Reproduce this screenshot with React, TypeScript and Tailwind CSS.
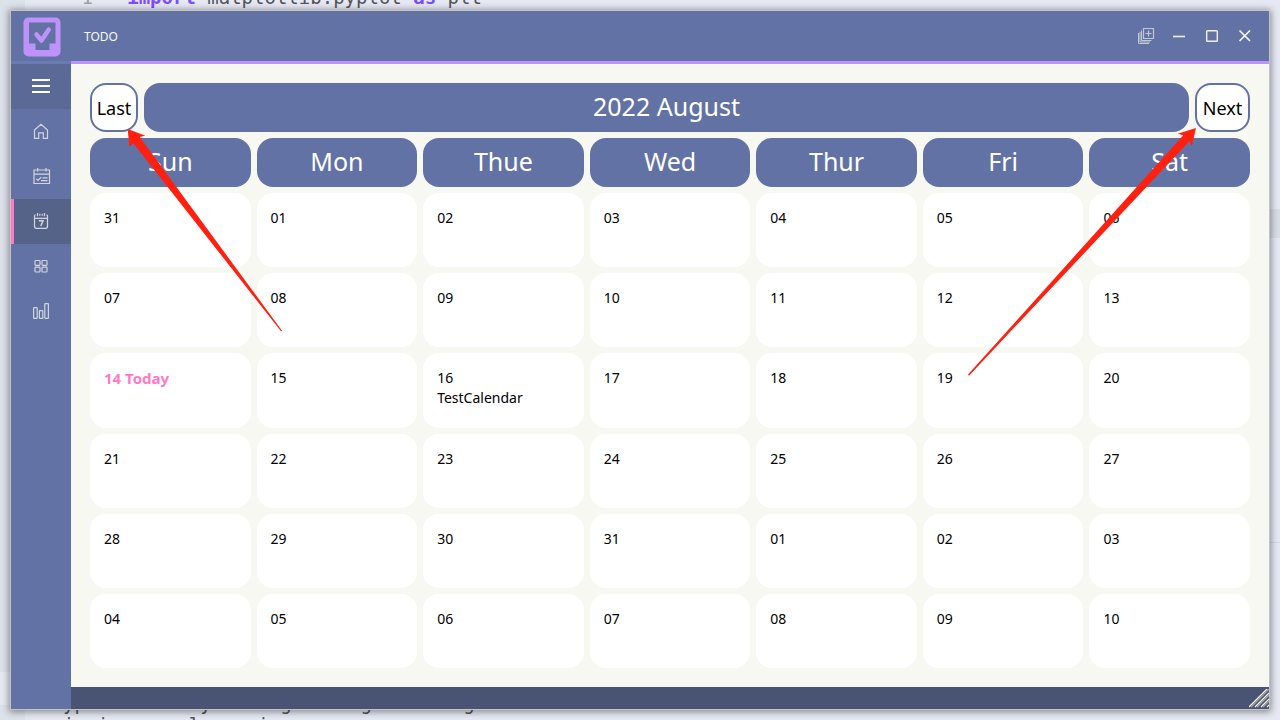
import type { ReactNode } from "react";

const weekdays = ["Sun", "Mon", "Thue", "Wed", "Thur", "Fri", "Sat"];

type Day = { label: string; today?: boolean; event?: string };

const pad = (n: number) => String(n).padStart(2, "0");

const days: Day[] = [
  { label: "31" },
  ...Array.from({ length: 31 }, (_, i) => ({
    label: pad(i + 1),
    today: i + 1 === 14,
    event: i + 1 === 16 ? "TestCalendar" : undefined,
  })),
  ...Array.from({ length: 10 }, (_, i) => ({ label: pad(i + 1) })),
];

const weeks = Array.from({ length: 6 }, (_, w) => days.slice(w * 7, w * 7 + 7));

function Logo() {
  return (
    <svg width="38" height="40" viewBox="0 0 38 40" aria-hidden="true">
      <rect x="0.500" y="0.500" width="37" height="39" rx="5" fill="#bd93f9" />
      <path d="M6 5.500H32.500V26.500H26.500V33H12.500V26.500H6Z" fill="#6272a4" />
      <path d="M13.500 17.500L18.500 23.500L25.800 12.500" fill="none" stroke="#bd93f9" strokeWidth="4.500" strokeLinecap="round" strokeLinejoin="round" />
    </svg>
  );
}

function Glyph({ children }: { children: ReactNode }) {
  return (
    <svg width="20" height="20" viewBox="0 0 20 20" fill="none" stroke="#d3d5dc" strokeWidth="1.2" aria-hidden="true">
      {children}
    </svg>
  );
}

const navItems = [
  {
    name: "Home",
    icon: (
      <Glyph>
        <path d="M3.500 9L10 3.300L16.500 9V17.300H12.300V11.800H7.700V17.300H3.500Z" />
      </Glyph>
    ),
  },
  {
    name: "Tasks",
    icon: (
      <Glyph>
        <path d="M3 4H18.500V17.500H3ZM3 8.200H18.500M6.700 2V5.500M15 2V5.500" />
        <path d="M5.300 12.800L7 14.500L10.300 11.200M11.500 11.800H16.500M10 14.700H16.500" />
      </Glyph>
    ),
  },
  {
    name: "Calendar",
    active: true,
    icon: (
      <Glyph>
        <path d="M4.500 3.800Q3.500 3.800 3.500 5V15.300Q3.500 17.300 5.500 17.300H14.500Q16.500 17.300 16.500 15.300V5Q16.500 3.800 15.500 3.800M3.500 7.300H16.500M6.500 2V5.200M13.500 2V5.200M8.800 2.800V4.800M11.200 2.800V4.800" />
        <path d="M7.800 9.800H12L9.800 15" strokeWidth="1.500" />
      </Glyph>
    ),
  },
  {
    name: "Board",
    icon: (
      <Glyph>
        <rect x="4" y="4.500" width="5" height="4.800" rx="0.800" />
        <rect x="11" y="4.500" width="5" height="4.800" rx="0.800" />
        <rect x="4" y="11.200" width="5" height="4.800" rx="0.800" />
        <rect x="11" y="11.200" width="5" height="4.800" rx="0.800" />
      </Glyph>
    ),
  },
  {
    name: "Statistics",
    icon: (
      <Glyph>
        <rect x="2.600" y="6.600" width="3.600" height="10.800" rx="0.600" />
        <rect x="8.400" y="9.600" width="3.400" height="7.800" rx="0.600" />
        <rect x="13.800" y="2.600" width="3.600" height="14.800" rx="0.600" />
      </Glyph>
    ),
  },
];

function TitleBar() {
  return (
    <header className="flex h-[50px] shrink-0 items-center bg-[#6272a4] pt-0.5 pr-2 pl-3">
      <Logo />
      <h1 className="ml-[23px] text-[12px] text-[#f8f8f2]">TODO</h1>
      <div className="mb-0.5 ml-auto flex">
        <button type="button" aria-label="Duplicate" className="grid h-8 w-[33px] place-items-center">
          <svg width="18" height="18" viewBox="0 0 18 18" fill="none" stroke="#c3c7d4" aria-hidden="true">
            <path d="M6.500 1.500H16.500V11.500H6.500Z" strokeWidth="1.200" />
            <path d="M11.500 3.500V9.500M8.500 6.500H14.500" strokeWidth="1.200" />
            <path d="M4.500 3.500V13.500H14.500M3 4.800V15H13M1.500 6V16.500H12" />
          </svg>
        </button>
        <button type="button" aria-label="Minimize" className="grid h-8 w-[33px] place-items-center">
          <svg width="14" height="14" viewBox="0 0 14 14" stroke="#f0f0f2" strokeWidth="1.600" aria-hidden="true">
            <path d="M1 7.500H13" />
          </svg>
        </button>
        <button type="button" aria-label="Maximize" className="grid h-8 w-[33px] place-items-center">
          <svg width="14" height="14" viewBox="0 0 14 14" fill="none" stroke="#f0f0f2" strokeWidth="1.400" aria-hidden="true">
            <rect x="1.700" y="1.700" width="10.600" height="10.600" rx="0.800" />
          </svg>
        </button>
        <button type="button" aria-label="Close" className="grid h-8 w-[33px] place-items-center">
          <svg width="14" height="14" viewBox="0 0 14 14" stroke="#f8f8f2" strokeWidth="1.700" aria-hidden="true">
            <path d="M1.500 1.500L12 12M12 1.500L1.500 12" />
          </svg>
        </button>
      </div>
    </header>
  );
}

function Sidebar() {
  return (
    <nav className="w-[60px] shrink-0 border-t-[3px] border-[#6a7ab2] bg-[#6272a4]">
      <button type="button" aria-label="Menu" className="flex h-[45px] w-full items-center justify-center bg-[#5b6996] pb-0.5">
        <svg width="20" height="16" viewBox="0 0 20 16" stroke="#ffffff" strokeWidth="2" aria-hidden="true">
          <path d="M1 2H19M1 8H19M1 14H19" />
        </svg>
      </button>
      {navItems.map((item) => (
        <button
          key={item.name}
          type="button"
          aria-label={item.name}
          className={
            item.active
              ? "flex h-[45px] w-full items-center justify-center border-l-[3px] border-[#ff79c6] bg-[#566388] pr-[3px] pb-0.5"
              : "flex h-[45px] w-full items-center justify-center pb-0.5"
          }
        >
          {item.icon}
        </button>
      ))}
    </nav>
  );
}

function Calendar() {
  return (
    <main className="relative flex min-h-0 flex-1 flex-col gap-1.5 border-t-[3px] border-[#bd93f9] bg-[#f8f8f2] p-[19px]">
      <div className="flex h-[49px] shrink-0 gap-1.5">
        <button type="button" className="w-12 rounded-2xl border-2 border-[#6272a4] bg-white pt-0.5 text-[18px] text-black">
          Last
        </button>
        <h2 className="flex flex-1 items-center justify-center rounded-2xl bg-[#6272a4] pb-0.5 text-[25px] text-white">
          2022 August
        </h2>
        <button type="button" className="w-[55px] rounded-2xl border-2 border-[#6272a4] bg-white pt-0.5 text-[18px] text-black">
          Next
        </button>
      </div>
      <table className="flex min-h-0 flex-1 flex-col gap-1.5">
        <thead className="block shrink-0">
          <tr className="grid grid-cols-7 gap-1.5">
            {weekdays.map((d) => (
              <th key={d} scope="col" className="flex h-[49px] items-center justify-center rounded-2xl bg-[#6272a4] pb-0.5 text-[25px] font-normal text-white">
                {d}
              </th>
            ))}
          </tr>
        </thead>
        <tbody className="flex min-h-0 flex-1 flex-col gap-1.5">
          {weeks.map((week, w) => (
            <tr key={w} className="grid min-h-0 flex-1 grid-cols-7 gap-1.5">
              {week.map((day, i) => (
                <td key={i} className="rounded-2xl bg-white px-3.5 pt-[15px] text-[14px] leading-5 text-black">
                  {day.today ? <strong className="text-[15px] text-[#ff79c6]">{day.label} Today</strong> : day.label}
                  {day.event && <p>{day.event}</p>}
                </td>
              ))}
            </tr>
          ))}
        </tbody>
      </table>
      <svg className="pointer-events-none absolute top-[64px] left-[56px]" width="156" height="204" viewBox="0 0 156 204" aria-hidden="true">
        <path d="M0.700 1L18.300 7.700L12.700 9L155 202.700L154 203.300L6.300 15.300L2.300 18.700Z" fill="#ff2010" />
      </svg>
      <svg className="pointer-events-none absolute top-[63px] right-[72px]" width="230" height="250" viewBox="0 0 230 250" aria-hidden="true">
        <path d="M229 1L210.700 6.700L216.300 8.300L1 247.500L2 248.700L222.700 14L224.700 19.300Z" fill="#ff2010" />
      </svg>
    </main>
  );
}

function StatusBar() {
  return (
    <footer className="flex h-[22px] shrink-0 items-end justify-end bg-[#495474]">
      <svg width="20" height="20" viewBox="0 0 20 20" aria-hidden="true">
        <path d="M0 18L20 -2M6 18L20 4M12 18L20 10M18 18L20 16" stroke="#f4f4ec" strokeWidth="1.300" />
        <path d="M2 18L20 0M8 18L20 6M14 18L20 12" stroke="#a5a5a0" strokeWidth="1.500" />
      </svg>
    </footer>
  );
}

function EditorBackdrop() {
  return (
    <div aria-hidden="true" className="absolute inset-0 flex overflow-hidden font-['DejaVu_Sans_Mono',monospace] text-[19px] leading-[22px] text-[#55555c]">
      <div className="flex w-[25px] shrink-0 flex-col justify-end bg-[#dde1ea] pb-[15px]">
        <div className="h-[33px] bg-[#e6e9f3]" />
      </div>
      <div className="flex flex-1 flex-col justify-between bg-[#e6e9f3]">
        <pre className="-mt-3.5 pl-[45px] font-[inherit]">
          <span className="text-[#a0a0a4]"> 1</span>
          {"   "}
          <span className="font-bold text-[#7c4dff]">import</span> matplotlib.pyplot <span className="font-bold text-[#7c4dff]">as</span> plt
        </pre>
        <pre className="-mb-4 pl-[38px] font-[inherit]">{"yp          y      g      g        g\ni  i       l     i"}</pre>
      </div>
      <div className="flex w-2.5 shrink-0 flex-col bg-[#e6e9f3] pt-[209px]">
        <div className="h-[29px] bg-[#d9dde6]" />
        <div className="mt-[304px] h-px bg-[#d6d9e2]" />
      </div>
    </div>
  );
}

export default function App() {
  return (
    <div className="relative h-screen overflow-hidden font-['Noto_Sans',sans-serif]">
      <EditorBackdrop />
      <div className="relative h-full p-2.5">
        <div className="flex h-full flex-col border border-[#c4c4c6] shadow-[0_1px_7px_1px_rgba(0,0,0,0.42)]">
          <TitleBar />
          <div className="flex min-h-0 flex-1">
            <Sidebar />
            <div className="flex min-w-0 flex-1 flex-col">
              <Calendar />
              <StatusBar />
            </div>
          </div>
        </div>
      </div>
    </div>
  );
}
